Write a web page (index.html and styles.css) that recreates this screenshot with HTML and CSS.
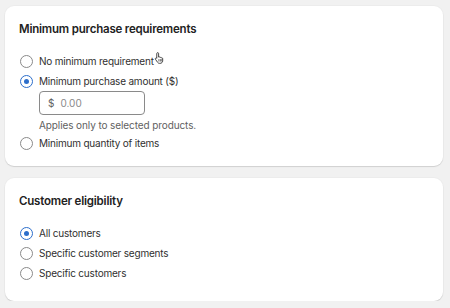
FILE: index.html
```html
<!DOCTYPE html>
<html lang="en">
<head>
<meta charset="UTF-8">
<title>Discount requirements</title>
<link rel="stylesheet" href="styles.css">
</head>
<body>

<!-- minimum purchase -->
<section class="card">
  <h2>Minimum purchase requirements</h2>
  <div class="opts">
    <label class="opt"><i class="radio"></i><span class="hov">No minimum requirement<svg class="cursor" width="12" height="14" viewBox="0 0 13 14"><path d="M4 1.2c.6 0 1 .4 1 1V6l.3-.1c.5-.2 1 0 1.2.4l.1.2c.4-.3 1-.2 1.3.2.4-.2 1-.1 1.3.4.1.2.2.4.2.6V10c0 1.6-1.2 2.8-2.8 2.8H6c-.9 0-1.6-.4-2.1-1.1L1.6 8.4c-.3-.5-.2-1 .2-1.3.4-.3 1-.2 1.3.2L3 7V2.2c0-.6.4-1 1-1z" fill="#fff" stroke="#222" stroke-width=".9" stroke-linejoin="round"/><path d="M5.3 8.2v2.6M6.9 8.2v2.6M8.4 8.2v2.6" stroke="#222" stroke-width=".7"/></svg></span></label>
    <label class="opt"><i class="radio on"></i><span>Minimum purchase amount ($)</span></label>
    <div class="sub">
      <div class="field"><span class="cur">$</span><span class="ph">0.00</span></div>
      <p class="help">Applies only to selected products.</p>
    </div>
    <label class="opt"><i class="radio"></i><span>Minimum quantity of items</span></label>
  </div>
</section>

<!-- eligibility -->
<section class="card">
  <h2>Customer eligibility</h2>
  <div class="opts">
    <label class="opt"><i class="radio on"></i><span>All customers</span></label>
    <label class="opt"><i class="radio"></i><span>Specific customer segments</span></label>
    <label class="opt"><i class="radio"></i><span>Specific customers</span></label>
  </div>
</section>

</body>
</html>
```

FILE: styles.css
```css
*{margin:0;padding:0;box-sizing:border-box}
body{background:#f1f1f1;font-family:Inter,"Liberation Sans",Arial,sans-serif;color:#303030;padding:6px 7px 0 5px;display:flex;flex-direction:column;gap:12px}
.card{background:#fff;border-radius:9px;padding:15px 14px 13px;box-shadow:0 1px 1px rgba(0,0,0,.12),0 0 0 1px rgba(0,0,0,.02)}
.card+.card{padding-top:15px;padding-bottom:18px}
h2{font-size:11.5px;font-weight:600;line-height:16px;letter-spacing:-.2px;color:#222}
.opts{margin-top:14px;display:flex;flex-direction:column}
.opt{display:flex;align-items:center;gap:6px;height:20px;font-size:10px;letter-spacing:-.2px;padding-left:1px}
.opt span{position:relative}
.radio{flex:none;width:13px;height:13px;border:1px solid #8a8a8a;border-radius:50%;display:flex;align-items:center;justify-content:center}
.radio.on{border:1.5px solid #2c6ecb}
.radio.on::after{content:"";width:5px;height:5px;border-radius:50%;background:#2c6ecb}
.sub{padding-left:20px}
.field{width:106px;height:24px;border:1px solid #8a8a8a;border-radius:4px;display:flex;align-items:center;gap:6px;padding-left:8px;font-size:10px;color:#8a8a8a}
.field .cur{color:#616161}
.help{font-size:10px;letter-spacing:-.1px;line-height:16px;color:#616161;margin-top:2px}
.cursor{position:absolute;right:-12px;top:-4px}
```
